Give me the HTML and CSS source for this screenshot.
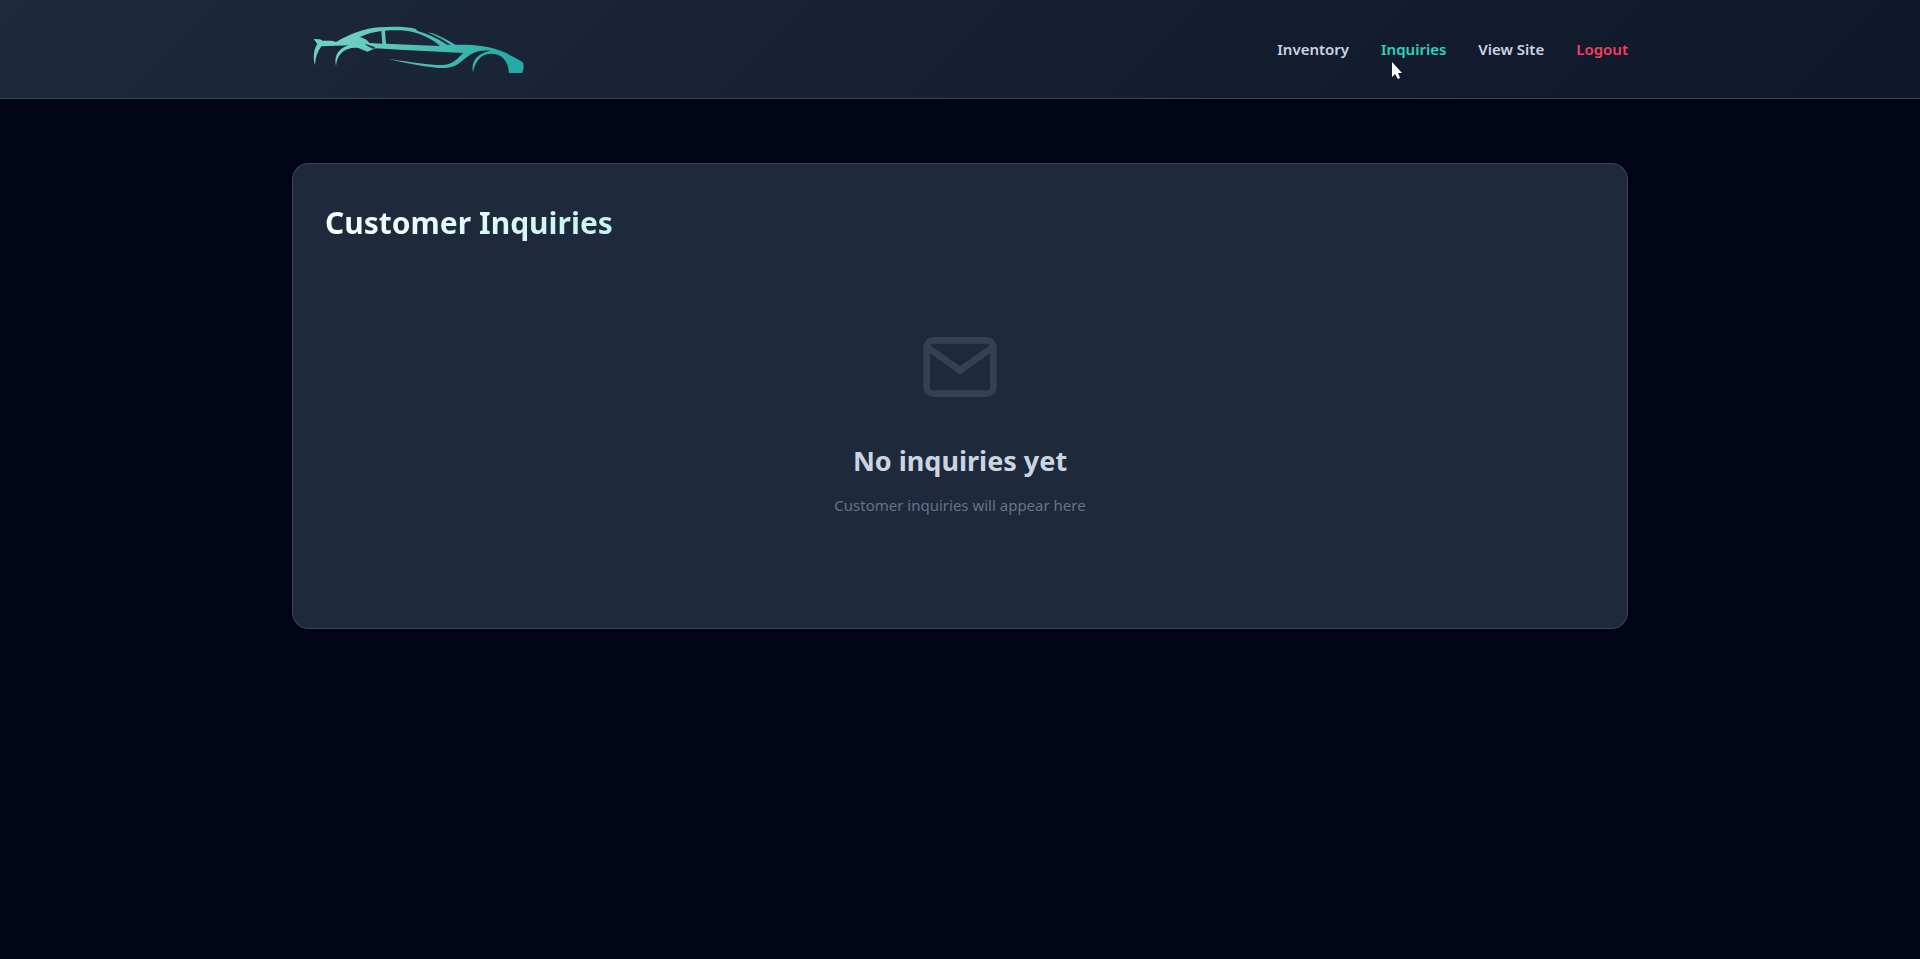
FILE: index.html
```html
<!DOCTYPE html>
<html lang="en">
  <head>
    <meta charset="UTF-8" />
    <meta name="viewport" content="width=device-width, initial-scale=1.0" />
    <title>Customer Inquiries</title>
    <link rel="stylesheet" href="styles.css">
  </head>
  <body>
    <header class="admin-header">
      <div class="header-inner">
        <a href="#" class="logo" aria-label="Home">
          <svg viewBox="6 -30 756 294" aria-hidden="true">
            <defs>
              <linearGradient id="car" gradientUnits="userSpaceOnUse" x1="180" y1="60" x2="640" y2="190">
                <stop offset="0" stop-color="#6dd0c5" />
                <stop offset="1" stop-color="#28aaa4" />
              </linearGradient>
            </defs>
            <g fill="url(#car)">
              <!-- body, skirt and fenders -->
              <path d="M71 87L90 88L98 92L126 92L138 96C180 72 222 55 270 52C310 49 350 50 376 56L383 63C410 70 440 84 472 104L530 104C580 106 625 116 650 130C675 143 690 152 700 158L701 174L697 189L657 189C655 152 634 131 604 131C574 131 556 152 549 187C542 156 560 130 602 122C568 118 545 128 522 148C500 168 485 176 445 174C400 169 340 158 295 147C340 153 400 162 440 165C490 168 498 148 520 129L330 119L256 115L232 125L205 114C170 110 142 128 138 167C130 135 150 112 178 106L94 109C82 125 76 145 75 166C67 138 73 115 82 102Z" />
              <path d="M413 67L432 71C455 80 478 92 498 106L484 106C464 91 440 78 413 67Z" />
            </g>
            <g fill="#1c2739">
              <!-- windows -->
              <path d="M210 81C232 71 252 66 274 63L277 101L238 99C234 91 222 84 210 81Z" />
              <path d="M285 62C320 59 350 61 368 66C398 74 428 88 450 108L288 101Z" />
              <path d="M224 101L256 112L249 116L231 107Z" />
            </g>
          </svg>
        </a>
        <nav class="nav-links">
          <a href="#">Inventory</a>
          <a href="#" class="active">Inquiries</a>
          <a href="#">View Site</a>
          <a href="#" class="logout">Logout</a>
          <svg class="cursor" viewBox="0 0 12 19" aria-hidden="true">
            <path d="M1 1V16L4 13L7 18L9 17L7 12H11Z" />
          </svg>
        </nav>
      </div>
    </header>
    <main class="container">
      <section class="card">
        <h1>Customer Inquiries</h1>
        <div class="empty-state">
          <svg class="empty-icon" viewBox="0 0 24 24" aria-hidden="true">
            <path d="M4 4h16c1.1 0 2 .9 2 2v12c0 1.1-.9 2-2 2H4c-1.1 0-2-.9-2-2V6c0-1.1.9-2 2-2z" />
            <polyline points="22,6 12,13 2,6" />
          </svg>
          <h2>No inquiries yet</h2>
          <p>Customer inquiries will appear here</p>
        </div>
      </section>
    </main>
  </body>
</html>
```
FILE: styles.css
```css
* {
  margin: 0;
  padding: 0;
  box-sizing: border-box;
}
body {
  background: #010416;
  color: #cbd5e1;
  font-family: "Segoe UI", "Noto Sans", sans-serif;
  font-size: 15px;
  line-height: 26px;
  min-height: 100vh;
}
.admin-header {
  background: linear-gradient(135deg, #1e293b 0%, #0f172a 100%);
  border-bottom: 1px solid #394559;
}
.header-inner,
.container {
  max-width: 1400px;
  margin: 0 auto;
  padding: 0 32px;
}
.header-inner {
  display: flex;
  justify-content: space-between;
  align-items: center;
}
.logo svg {
  display: block;
  width: 252px;
  height: 98px;
}
.nav-links {
  position: relative;
  display: flex;
  gap: 32px;
}
.nav-links a {
  color: #cbd5e1;
  font-weight: 600;
  text-decoration: none;
}
.nav-links a.active {
  color: #2dd4bf;
}
.nav-links a.logout {
  color: #f43f5e;
}
/* pointer lies over the nav */
.cursor {
  position: absolute;
  right: 225px;
  top: 25px;
  width: 12px;
  height: 19px;
  fill: #fff;
}
.container {
  padding-top: 64px;
  padding-bottom: 64px;
}
.card {
  background: #1e293b;
  border: 1px solid #394559;
  border-radius: 16px;
  padding: 32px;
}
.card h1 {
  font-size: 30px;
  line-height: 54px;
  background: linear-gradient(135deg, #fff 0%, #bff3ec 100%);
  -webkit-background-clip: text;
  background-clip: text;
  color: transparent;
  width: fit-content;
}
.empty-state {
  text-align: center;
  padding: 77px 32px;
}
.empty-icon {
  display: block;
  width: 80px;
  height: 80px;
  margin: 0 auto 32px;
  fill: none;
  stroke: #334155;
  stroke-width: 2;
}
.empty-state h2 {
  font-size: 27px;
  line-height: 44px;
  margin-bottom: 8px;
}
.empty-state p {
  color: #64748b;
  line-height: 28px;
}
```
